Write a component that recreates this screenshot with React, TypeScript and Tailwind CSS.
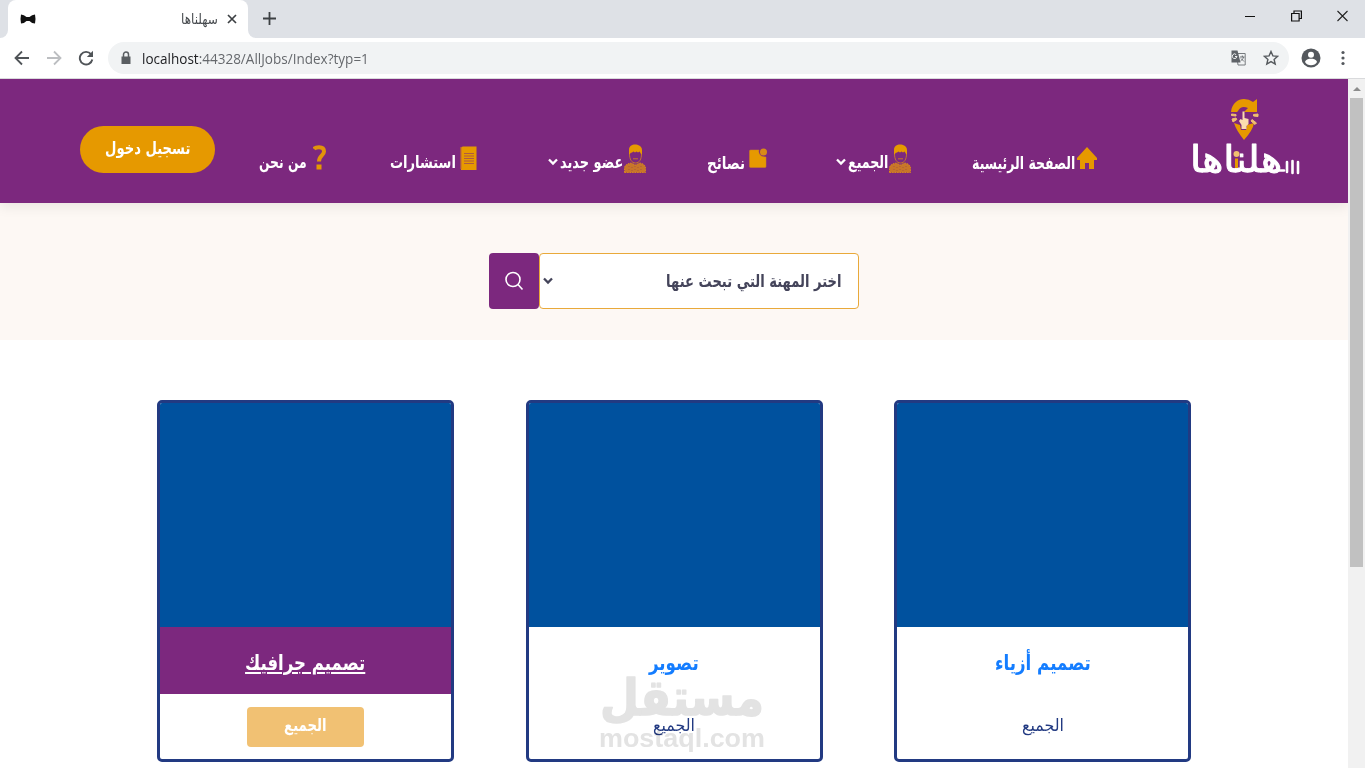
import { useLayoutEffect, useRef, useState } from 'react'
import type { ReactNode } from 'react'

interface NavItem {
  label: string
  icon: ReactNode
  itemClass: string
  labelClass: string
  dropdown?: boolean
}

interface Job {
  title: string
  titleClass: string
  active?: boolean
}

function PersonIcon() {
  return (
    <svg className="w-[22px] h-[29px] shrink-0" viewBox="0 0 22 29">
      <path d="M5 12V6C5 2 8 .5 11 .5S18 2 18 6v6l-1.500-3-1-1.500-1.500 1-1.500-1-1.500 1-1.500-1-1.500 1L6.500 9z" fill="#e69900" />
      <path d="M5.500 10c0 5 2 9 6 9s6-4 6-9M9 14.800h5" fill="none" stroke="#c4762c" strokeWidth="1" />
      <path d="M.5 28.500v-4c0-3 2-4.500 6.500-5.500l4.500 2 4.500-2c4 1 5.500 2.500 5.500 5.500v4z" fill="#c87629" stroke="#d9881c" strokeDasharray="1.500 1" />
      <path d="M5 22v5M8 23v4M11 22v5M14 23v4M17 22v5" stroke="#a9573f" strokeDasharray="1 2" />
    </svg>
  )
}

function HomeIcon() {
  return (
    <svg className="w-[20px] h-[23px] shrink-0" viewBox="0 0 20 23">
      <path d="M10 0 0 11v2h3v9h5V16h4v6h5V13h3v-2z" fill="#e69900" />
    </svg>
  )
}

function NoteIcon() {
  return (
    <svg className="w-[18px] h-[21px] shrink-0" viewBox="0 0 18 21">
      <path d="M1.500 2H10c-1 4 2 7 7 7v9.500q0 1-1 1H1.500q-1 0-1-1V3q0-1 1-1z" fill="#e69900" stroke="#cf8120" strokeWidth=".5" />
      <circle cx="14.500" cy="4" r="3.500" fill="#d98a17" />
    </svg>
  )
}

function PaperIcon() {
  return (
    <svg className="w-[17px] h-[25px] shrink-0" viewBox="0 0 17 25">
      <path d="M1 2q0-1.500 2-1.500h13.500V24H1z" fill="#e69900" />
      <path d="M1 1v22" stroke="#c4702c" strokeWidth="1.200" />
      <path d="M4 7.500h10M4 10h10M4 12.500h10M4 15h10M4 17.500h10" stroke="#ad5b42" strokeWidth="1.200" />
    </svg>
  )
}

function QuestionIcon() {
  return (
    <svg className="w-[14px] h-[25px] shrink-0" viewBox="0 0 14 25">
      <path d="M1 4C2 2.600 4 2.200 6 2.200c3.500 0 5 1.500 5 4.300 0 4-5 4-5 10" fill="none" stroke="#e2940a" strokeWidth="4" />
      <path d="M3.500 19.500h5v5h-5z" fill="#e69900" />
    </svg>
  )
}

function Chevron({ className }: { className: string }) {
  return (
    <svg className={className} viewBox="0 0 10 8">
      <path d="m1 1.500 4 4 4-4" fill="none" stroke="currentColor" strokeWidth="2.300" />
    </svg>
  )
}

const NAV: NavItem[] = [
  { label: 'الصفحة الرئيسية', icon: <HomeIcon />, itemClass: 'w-[126px] ms-[93px] pt-[68px]', labelClass: 'mt-[4px] ms-[2px] w-[103px]' },
  { label: 'الجميع', icon: <PersonIcon />, itemClass: 'w-[75px] ms-[60px] pt-[65px]', labelClass: 'mt-[6px] ms-[1px] w-[40px]', dropdown: true },
  { label: 'نصائح', icon: <NoteIcon />, itemClass: 'w-[60px] ms-[69px] pt-[69px]', labelClass: 'mt-[3px] ms-[4px] w-[38px]' },
  { label: 'عضو جديد', icon: <PersonIcon />, itemClass: 'w-[98px] ms-[61px] pt-[65px]', labelClass: 'mt-[6px] ms-[1px] w-[63px]', dropdown: true },
  { label: 'استشارات', icon: <PaperIcon />, itemClass: 'w-[87px] ms-[71px] pt-[67px]', labelClass: 'mt-[4px] ms-[4px] w-[66px]' },
  { label: 'من نحن', icon: <QuestionIcon />, itemClass: 'w-[68px] ms-[63px] pt-[66px]', labelClass: 'mt-[5px] ms-[6px] w-[48px]' },
]

const JOBS: Job[] = [
  { title: 'تصميم أزياء', titleClass: 'w-[96px]' },
  { title: 'تصوير', titleClass: 'w-[50px]' },
  { title: 'تصميم جرافيك', titleClass: 'w-[120px]', active: true },
]

/** One line of text condensed to the width that its className sets. */
function Line({ children, className }: { children: ReactNode; className: string }) {
  const box = useRef<HTMLSpanElement>(null)
  const text = useRef<HTMLSpanElement>(null)
  const [scale, setScale] = useState(1)

  useLayoutEffect(() => {
    if (box.current && text.current && text.current.offsetWidth > 0) {
      setScale(box.current.offsetWidth / text.current.offsetWidth)
    }
  }, [])

  return (
    <span ref={box} className={`flex shrink-0 whitespace-nowrap ${className}`}>
      <span ref={text} className="shrink-0 origin-left rtl:origin-right" style={{ transform: `scaleX(${scale})` }}>
        {children}
      </span>
    </span>
  )
}

function BrowserBar() {
  return (
    <div dir="ltr" className="h-[79px] bg-white">
      <div className="flex h-[38px] bg-[#dee1e6]">
        <div className="w-2 bg-white">
          <div className="h-full rounded-br-lg bg-[#dee1e6]" />
        </div>
        <div className="flex w-[240px] items-center rounded-t-lg bg-white ps-3">
          <svg className="w-4 h-3" viewBox="0 0 16 12">
            <path d="M1 1.500q3 0 5.500 2.500h3Q12 1.500 15 1.500q1 4.500 0 9-3 0-5.500-2.500h-3Q4 10.500 1 10.500q-1-4.500 0-9z" fill="#111" />
          </svg>
          <Line className="ms-[145px] w-[37px] text-[14px] text-[#45494d]">سهلناها</Line>
          <svg className="ms-[9px] w-[10px] h-[10px]" viewBox="0 0 10 10">
            <path d="m1 1 8 8M9 1 1 9" stroke="#3c4043" strokeWidth="1.700" />
          </svg>
        </div>
        <div className="w-[8px] bg-white">
          <div className="h-full rounded-bl-lg bg-[#dee1e6]" />
        </div>
        <svg className="mt-[12px] ms-[7px] w-[13px] h-[13px]" viewBox="0 0 13 13">
          <path d="M6.500 0v13M0 6.500h13" stroke="#3c4043" strokeWidth="1.800" />
        </svg>
        <div className="ms-auto flex gap-[35px] pe-[17px] pt-[10px]">
          <svg className="w-[11px] h-[12px]" viewBox="0 0 11 12">
            <path d="M0 6.500h10" stroke="#111" />
          </svg>
          <svg className="w-[11px] h-[12px]" viewBox="0 0 11 12">
            <path d="M.6 3.500h7.500V11H.6zM3 3V1h7.400v7.500H8.500" fill="none" stroke="#111" strokeWidth="1.200" />
          </svg>
          <svg className="w-[11px] h-[12px]" viewBox="0 0 11 12">
            <path d="m.5 1 10 10M10.500 1l-10 10" stroke="#222" strokeWidth="1.100" />
          </svg>
        </div>
      </div>
      <div className="flex h-[40px] items-center ps-[14px]">
        <svg className="w-4 h-4 text-[#505458]" viewBox="0 0 16 16">
          <path d="M15 8H2M8 1.500 1.500 8 8 14.500" fill="none" stroke="currentColor" strokeWidth="1.800" />
        </svg>
        <svg className="ms-4 w-4 h-4 text-[#bcbec1]" viewBox="0 0 16 16">
          <path d="M1 8h13M8 1.500 14.500 8 8 14.500" fill="none" stroke="currentColor" strokeWidth="1.800" />
        </svg>
        <svg className="ms-4 w-4 h-4 text-[#505458]" viewBox="0 0 16 16">
          <path d="M13 4.200A6.300 6.300 0 1 0 14.300 9.500" fill="none" stroke="currentColor" strokeWidth="1.900" />
          <path d="M15 .8V7H8.800z" fill="currentColor" />
        </svg>
        <div className="ms-[14px] flex h-[32px] w-[1181px] items-center rounded-full bg-[#f1f3f4] ps-[13px] pe-[10px]">
          <svg className="w-[10px] h-[14px]" viewBox="0 0 10 14">
            <path d="M.5 5.500h9v7.500h-9z" fill="#5a5e62" />
            <path d="M2.500 6V3.500a2.500 2.500 0 0 1 5 0V6" fill="none" stroke="#5a5e62" strokeWidth="1.500" />
          </svg>
          <Line className="ms-[11px] w-[227px] font-['Open_Sans',sans-serif] text-[14px] text-[#66696d]">
            <span className="text-[#202124]">localhost</span>:44328/AllJobs/Index?typ=1
          </Line>
          <svg className="ms-auto w-[15px] h-[16px]" viewBox="0 0 15 16">
            <path d="M5.500 3.500h8.700V15H7z" fill="#f1f3f4" stroke="#777b7f" />
            <path d="M.5.500h6l3 12h-9z" fill="#5f6368" />
            <path d="M9 7h4.500M11.300 5.500V7M12.500 7c-.5 2-1.500 3-3 4M10 8.500l3 3" fill="none" stroke="#5f6368" strokeWidth=".9" />
            <path d="M6.200 6.500H4M5.800 6.800A2.300 2.300 0 1 1 5.200 4.600" fill="none" stroke="#f1f3f4" />
          </svg>
          <svg className="ms-[17px] w-4 h-4" viewBox="0 0 16 16">
            <path d="m8 1.500 1.900 4.400 4.800.4-3.600 3.100 1.100 4.700L8 11.600l-4.200 2.500 1.100-4.700L1.300 6.300l4.800-.4z" fill="none" stroke="#55595d" strokeWidth="1.400" />
          </svg>
        </div>
        <svg className="ms-[12px] w-[20px] h-[20px]" viewBox="0 0 20 20">
          <circle cx="10" cy="10" r="9.500" fill="#54585d" />
          <circle cx="10" cy="6.700" r="3" fill="#fff" />
          <path d="M4 14c1-3 4-3.300 6-3.300s5 .3 6 3.300q-2 3.300-6 3.300T4 14z" fill="#fff" />
        </svg>
        <svg className="ms-[20px] w-1 h-4" viewBox="0 0 4 16" fill="#54585d">
          <circle cx="2" cy="2.500" r="1.600" />
          <circle cx="2" cy="8" r="1.600" />
          <circle cx="2" cy="13.500" r="1.600" />
        </svg>
      </div>
      <div className="h-px bg-[#d9dadc]" />
    </div>
  )
}

function Logo() {
  return (
    <svg className="mt-[18px] w-[112px] h-[80px] shrink-0" viewBox="0 0 112 80" overflow="visible">
      {/* map pin with the raised hand */}
      <path d="M41 15C42 6 48 2 54 2q5 0 9 3l4-3v13H54l4-4q-7-3-10 3l-1 1z" fill="#e69900" />
      <path d="m44 26 6 2 1 5h5l1-5 7-2q-1 7-10 17-8-10-10-17z" fill="#e69900" />
      <path d="m41.500 17 4.500.500v1.500l-4.500-.5zM42 22l4-1 .8 1.500L43 25zM68 17l-4.500.5V19l4.500.5zM66.500 26 62 22.500l-1 1.500 4 3.500z" fill="#f0c070" stroke="#f0c070" />
      <path d="M51.500 32v-4l-2.500-4 1.500-2 2 1V14.500h2V21l4 1v5l-2 2v3z" fill="#fbdcae" />
      <text x="0" y="74.500" fontFamily="DejaVu Sans" fontSize="37" direction="ltr" textLength="92" lengthAdjust="spacingAndGlyphs" fill="#fff" stroke="#fff" strokeWidth="1" strokeLinejoin="round">
        هلناها
      </text>
      <path d="M46.500 53v17.500" stroke="#7c287e" strokeWidth="6.500" />
      <circle cx="46.500" cy="57" r="3" fill="#f0c070" />
      <path d="M46.500 61.500v9.500" stroke="#e69900" strokeWidth="3" />
      <path d="M88 73.500h6M97 65v10M102.500 64v12M108 65v11" stroke="#fff" strokeWidth="2.600" strokeLinecap="round" />
    </svg>
  )
}

function Header() {
  return (
    <header className="relative flex h-[124px] items-start bg-[#7c287e] ps-[46px] text-white shadow-[0_4px_12px_rgba(0,0,0,0.08)]">
      <Logo />
      {NAV.map((item) => (
        <a key={item.label} className={`flex shrink-0 items-start ${item.itemClass}`}>
          {item.icon}
          <Line className={`text-[17px] leading-6 font-bold ${item.labelClass}`}>{item.label}</Line>
          {item.dropdown && <Chevron className="ms-[2px] mt-[14px] w-[10px] h-[8px] shrink-0" />}
        </a>
      ))}
      <button type="button" className="ms-[44px] mt-[47px] flex h-[47px] w-[135px] shrink-0 justify-center rounded-full bg-[#e69900] pt-[10px]">
        <Line className="w-[85px] text-[17px] leading-6 font-bold">تسجيل دخول</Line>
      </button>
    </header>
  )
}

function SearchBar() {
  return (
    <section className="flex h-[137px] justify-center bg-[#fdf8f4] pt-[50px] pr-px">
      <div className="flex h-[56px] w-[320px] items-center rounded border border-[#e9a93a] bg-white ps-4 text-[#44445a]">
        <Line className="w-[175px] text-[17px] leading-6 font-bold">اختر المهنة التي تبحث عنها</Line>
        <Chevron className="ms-auto me-[3px] w-[10px] h-[8px]" />
      </div>
      <button type="button" className="flex h-[56px] w-[50px] items-center justify-center rounded bg-[#7c287e]">
        <svg className="w-[20px] h-[20px]" viewBox="0 0 20 20">
          <circle cx="9" cy="8.500" r="7" fill="none" stroke="#fff" strokeWidth="1.600" />
          <path d="m14 13.500 4.500 5" stroke="#fff" strokeWidth="1.600" />
        </svg>
      </button>
    </section>
  )
}

function JobCard({ job }: { job: Job }) {
  return (
    <article className="h-[362px] w-[297px] overflow-hidden rounded-[5px] border-[3px] border-[#223a82]">
      <div className="h-[224px] bg-[#00519e]" />
      <div className={`flex h-[67px] justify-center pt-[20px] ${job.active ? 'bg-[#7c287e] text-white' : 'text-[#147dff]'}`}>
        <Line className={`text-[21px] leading-8 font-bold ${job.active ? 'underline decoration-2 underline-offset-2' : ''} ${job.titleClass}`}>{job.title}</Line>
      </div>
      <div className="flex justify-center pt-[13px]">
        <div className={`flex h-[40px] w-[117px] justify-center rounded pt-[6px] ${job.active ? 'bg-[#f1c173] font-bold text-white' : 'text-[#223a82]'}`}>
          <Line className="w-[42px] text-[17px] leading-6">الجميع</Line>
        </div>
      </div>
    </article>
  )
}

function Watermark() {
  return (
    <div className="pointer-events-none absolute top-[674px] left-[598px] mix-blend-multiply">
      <svg width="168" height="80" viewBox="0 0 168 80" overflow="visible" fill="#e3e3e3">
        <text x="84" y="41" fontSize="50" fontWeight="700" direction="rtl" textAnchor="middle" textLength="164" lengthAdjust="spacingAndGlyphs" stroke="#e3e3e3" strokeWidth="1.500" strokeLinejoin="round">
          مستقل
        </text>
        <text x="1" y="72.500" fontFamily="Liberation Sans" fontSize="26" fontWeight="700" textLength="166" lengthAdjust="spacingAndGlyphs">
          mostaql.com
        </text>
      </svg>
    </div>
  )
}

export default function App() {
  return (
    <div className="relative h-[768px] w-[1365px] overflow-hidden bg-white font-['DejaVu_Sans',sans-serif]">
      <BrowserBar />
      <div className="flex h-[689px]">
        <main dir="rtl" className="w-[1348px] overflow-hidden">
          <Header />
          <SearchBar />
          <section className="flex justify-center gap-[71.5px] pt-[60px]">
            {JOBS.map((job) => (
              <JobCard key={job.title} job={job} />
            ))}
          </section>
        </main>
        <div className="flex w-[17px] flex-col items-center bg-[#f1f1f1]">
          <svg className="my-[6px] w-[8px] h-[7px]" viewBox="0 0 8 7">
            <path d="M0 6 4 2l4 4z" fill="#8c8c8c" />
          </svg>
          <div className="h-[469px] w-[13px] bg-[#c1c1c1]" />
        </div>
      </div>
      <Watermark />
    </div>
  )
}
